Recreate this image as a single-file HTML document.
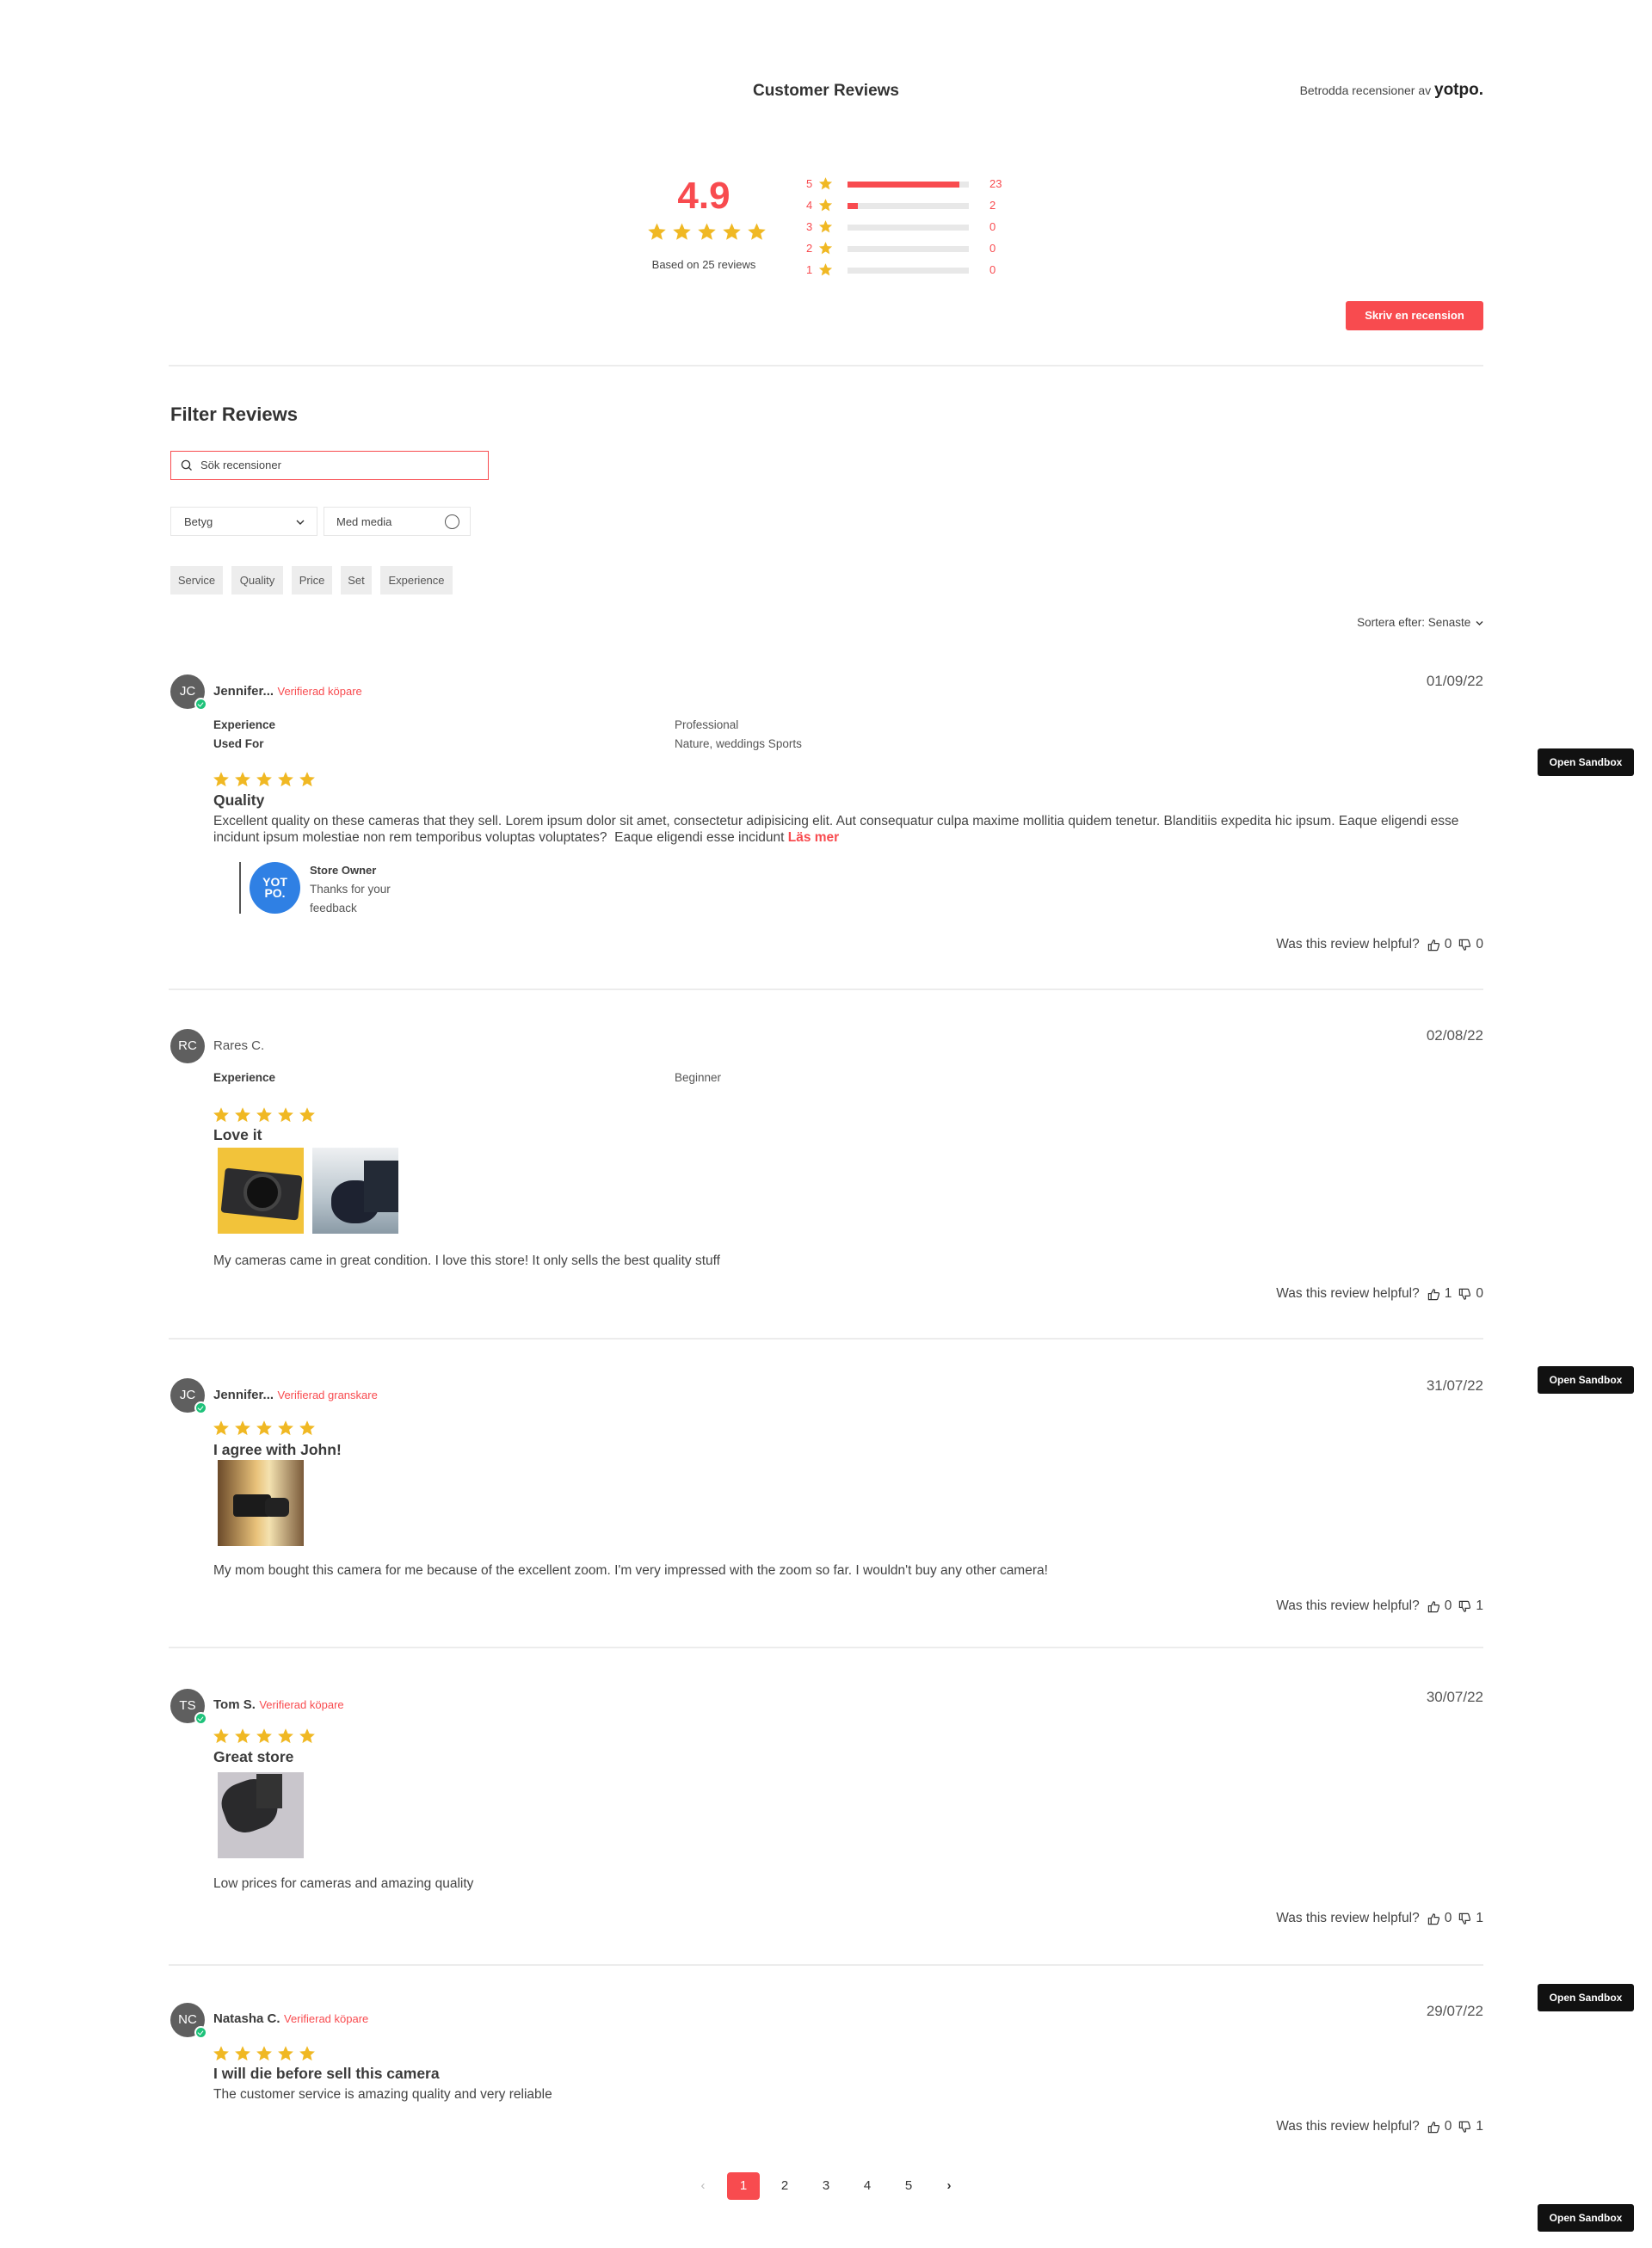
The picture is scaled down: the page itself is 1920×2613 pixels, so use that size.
<!DOCTYPE html>
<html><head><meta charset="utf-8">
<style>
*{margin:0;padding:0;box-sizing:border-box}
body{width:1920px;height:2613px;position:relative;background:#fff;font-family:"Liberation Sans",sans-serif;color:#3b3b3b;overflow:hidden}
.a{position:absolute;white-space:nowrap}
.c{line-height:20px}
.b{font-weight:bold}
.red{color:#f84b4f}
.sm{font-size:13px}
.hr{position:absolute;left:196px;width:1528px;height:2px;background:#ececec}
.av{position:absolute;left:198px;width:40px;height:40px;border-radius:50%;background:#5f5f5f;color:#fff;font-size:15px;line-height:40px;text-align:center}
.av i{position:absolute;right:-3px;bottom:-2px;width:15px;height:15px;border-radius:50%;background:#1ec27a;border:2px solid #fff}
.av i:after{content:"";position:absolute;left:3px;top:2px;width:3px;height:5px;border:solid #fff;border-width:0 1.5px 1.5px 0;transform:rotate(40deg)}
.date{position:absolute;right:196px;font-size:17px;line-height:20px;color:#555}
.help{position:absolute;right:196px;font-size:15.5px;line-height:20px;color:#444;display:flex;align-items:center;gap:5px}
.sb{position:absolute;left:1787px;width:112px;height:32px;background:#111;color:#fff;font-size:12px;font-weight:bold;line-height:32px;text-align:center;border-radius:3px}
.tag{position:absolute;top:658px;height:33px;background:#ededed;font-size:13px;line-height:33px;text-align:center;color:#555}
.bar{position:absolute;left:985px;width:141px;height:7px;background:#e8e8e8}
.bar i{position:absolute;left:0;top:0;height:7px;background:#f84b4f}
.img{position:absolute;width:100px;height:100px;overflow:hidden}
.pg{position:absolute;top:2531px;font-size:15px;line-height:20px;width:38px;text-align:center;color:#333}
.nm{font-size:15px}
.vf{font-size:13px}
.lb{font-size:13.5px}
.tt{font-size:17.5px}
.tx{font-size:15.5px;color:#444}
</style></head><body>
<svg width="0" height="0" style="position:absolute"><defs><symbol id="st" viewBox="0 0 24 24"><path fill="#f0b823" d="M12 1.5l3.1 7.1 7.6.6-5.8 5 1.8 7.5L12 17.7 5.3 21.7l1.8-7.5-5.8-5 7.6-.6z"/></symbol>
<symbol id="up" viewBox="0 0 16 16"><path fill="none" stroke="#333" stroke-width="1.3" d="M1.5 7h3v7.5h-3zM4.5 7.5l3-5.5c1.2 0 1.8.8 1.5 2L8.5 6H13c1 0 1.6.9 1.3 1.8l-1.6 5.6c-.2.7-.8 1.1-1.4 1.1H4.5"/></symbol>
<symbol id="dn" viewBox="0 0 16 16"><path fill="none" stroke="#333" stroke-width="1.3" d="M1.5 1.5h3V9h-3zM4.5 8.5l3 5.5c1.2 0 1.8-.8 1.5-2L8.5 10H13c1 0 1.6-.9 1.3-1.8L12.7 2.6c-.2-.7-.8-1.1-1.4-1.1H4.5"/></symbol></defs></svg>

<div class="a b c" style="left:0;width:1920px;text-align:center;top:96px;font-size:19px;color:#333">Customer Reviews</div>
<div class="a" style="right:196px;top:94px;line-height:22px;font-size:14px;color:#444">Betrodda recensioner av <span style="font-size:19px;font-weight:bold;color:#222">yotpo.</span></div>

<div class="a b red" style="left:758px;width:120px;text-align:center;top:203px;font-size:44px;line-height:50px">4.9</div>
<div class="a" style="left:752px;top:258px;height:24px">
<svg width="23" height="23"><use href="#st"/></svg><svg width="23" height="23" style="margin-left:6px"><use href="#st"/></svg><svg width="23" height="23" style="margin-left:6px"><use href="#st"/></svg><svg width="23" height="23" style="margin-left:6px"><use href="#st"/></svg><svg width="23" height="23" style="margin-left:6px"><use href="#st"/></svg></div>
<div class="a c" style="left:748px;width:140px;text-align:center;top:298px;font-size:13px;color:#444">Based on 25 reviews</div>

<div class="a red c sm" style="left:937px;top:204px">5</div><svg class="a" style="left:951px;top:205px" width="17" height="17"><use href="#st"/></svg><div class="bar" style="top:211px"><i style="width:130px"></i></div><div class="a red c sm" style="left:1150px;top:204px">23</div>
<div class="a red c sm" style="left:937px;top:229px">4</div><svg class="a" style="left:951px;top:230px" width="17" height="17"><use href="#st"/></svg><div class="bar" style="top:236px"><i style="width:12px"></i></div><div class="a red c sm" style="left:1150px;top:229px">2</div>
<div class="a red c sm" style="left:937px;top:254px">3</div><svg class="a" style="left:951px;top:255px" width="17" height="17"><use href="#st"/></svg><div class="bar" style="top:261px"></div><div class="a red c sm" style="left:1150px;top:254px">0</div>
<div class="a red c sm" style="left:937px;top:279px">2</div><svg class="a" style="left:951px;top:280px" width="17" height="17"><use href="#st"/></svg><div class="bar" style="top:286px"></div><div class="a red c sm" style="left:1150px;top:279px">0</div>
<div class="a red c sm" style="left:937px;top:304px">1</div><svg class="a" style="left:951px;top:305px" width="17" height="17"><use href="#st"/></svg><div class="bar" style="top:311px"></div><div class="a red c sm" style="left:1150px;top:304px">0</div>

<div class="a b" style="right:196px;top:350px;width:160px;height:34px;background:#f84b4f;color:#fff;font-size:13px;line-height:34px;text-align:center;border-radius:3px">Skriv en recension</div>
<div class="hr" style="top:424px"></div>

<div class="a b" style="left:198px;top:467px;font-size:22px;line-height:30px;color:#333">Filter Reviews</div>
<div class="a" style="left:198px;top:524px;width:370px;height:34px;border:1.5px solid #f84b4f"><svg class="a" style="left:11px;top:9px" width="14" height="14" viewBox="0 0 14 14"><circle cx="6" cy="6" r="4.6" fill="none" stroke="#333" stroke-width="1.3"/><path d="M9.3 9.3L12.5 12.5" stroke="#333" stroke-width="1.3"/></svg><span class="a c" style="left:34px;top:6px;font-size:13px;color:#444">Sök recensioner</span></div>
<div class="a" style="left:198px;top:589px;width:171px;height:34px;border:1px solid #e6e6e6"><span class="a c" style="left:15px;top:7px;font-size:13px;color:#444">Betyg</span><svg class="a" style="left:145px;top:13px" width="10" height="8"><path d="M1 2l4 4 4-4" fill="none" stroke="#333" stroke-width="1.4"/></svg></div>
<div class="a" style="left:376px;top:589px;width:171px;height:34px;border:1px solid #e6e6e6"><span class="a c" style="left:14px;top:7px;font-size:13px;color:#444">Med media</span><span class="a" style="left:140px;top:8px;width:17px;height:17px;border:1.3px solid #555;border-radius:50%"></span></div>

<div class="tag" style="left:198px;width:61px">Service</div>
<div class="tag" style="left:269px;width:60px">Quality</div>
<div class="tag" style="left:339px;width:47px">Price</div>
<div class="tag" style="left:396px;width:36px">Set</div>
<div class="tag" style="left:442px;width:84px">Experience</div>

<div class="a c" style="right:196px;top:714px;font-size:13.5px;color:#444">Sortera efter: Senaste <svg width="9" height="7" style="margin-left:2px"><path d="M1 1.5l3.5 3.5 3.5-3.5" fill="none" stroke="#333" stroke-width="1.4"/></svg></div>

<!-- Review 1 -->
<div class="av" style="top:784px">JC<i></i></div>
<div class="a c" style="left:248px;top:794px"><b class="nm">Jennifer...</b> <span class="red vf">Verifierad köpare</span></div>
<div class="date" style="top:782px">01/09/22</div>
<div class="a b c lb" style="left:248px;top:833px">Experience</div>
<div class="a c lb" style="left:784px;top:833px;color:#555">Professional</div>
<div class="a b c lb" style="left:248px;top:855px">Used For</div>
<div class="a c lb" style="left:784px;top:855px;color:#555">Nature, weddings Sports</div>
<div class="a" style="left:247px;top:896px;height:20px"><svg width="20" height="20"><use href="#st"/></svg><svg width="20" height="20" style="margin-left:5px"><use href="#st"/></svg><svg width="20" height="20" style="margin-left:5px"><use href="#st"/></svg><svg width="20" height="20" style="margin-left:5px"><use href="#st"/></svg><svg width="20" height="20" style="margin-left:5px"><use href="#st"/></svg></div>
<div class="a b c tt" style="left:248px;top:920px">Quality</div>
<div class="a tx" style="left:248px;top:945px;width:1476px;line-height:19px;white-space:normal">Excellent quality on these cameras that they sell. Lorem ipsum dolor sit amet, consectetur adipisicing elit. Aut consequatur culpa maxime mollitia quidem tenetur. Blanditiis expedita hic ipsum. Eaque eligendi esse incidunt ipsum molestiae non rem temporibus voluptas voluptates?&nbsp; Eaque eligendi esse incidunt <b class="red">Läs mer</b></div>
<div class="a" style="left:278px;top:1002px;width:1.5px;height:60px;background:#555"></div>
<div class="a b" style="left:290px;top:1002px;width:59px;height:60px;border-radius:50%;background:#2f80e4;color:#fff;font-size:14px;line-height:13px;text-align:center;padding-top:17px">YOT<br>PO.</div>
<div class="a b c" style="left:360px;top:1002px;font-size:13px">Store Owner</div>
<div class="a c" style="left:360px;top:1024px;font-size:13.5px;color:#555">Thanks for your</div>
<div class="a c" style="left:360px;top:1046px;font-size:13.5px;color:#555">feedback</div>
<div class="help" style="top:1088px">Was this review helpful? <svg width="15" height="15" style="margin-left:4px"><use href="#up"/></svg>0 <svg width="15" height="15" style="margin-left:3px"><use href="#dn"/></svg>0</div>
<div class="hr" style="top:1149px"></div>

<!-- Review 2 -->
<div class="av" style="top:1196px">RC</div>
<div class="a c nm" style="left:248px;top:1206px;color:#555">Rares C.</div>
<div class="date" style="top:1194px">02/08/22</div>
<div class="a b c lb" style="left:248px;top:1243px">Experience</div>
<div class="a c lb" style="left:784px;top:1243px;color:#555">Beginner</div>
<div class="a" style="left:247px;top:1286px;height:20px"><svg width="20" height="20"><use href="#st"/></svg><svg width="20" height="20" style="margin-left:5px"><use href="#st"/></svg><svg width="20" height="20" style="margin-left:5px"><use href="#st"/></svg><svg width="20" height="20" style="margin-left:5px"><use href="#st"/></svg><svg width="20" height="20" style="margin-left:5px"><use href="#st"/></svg></div>
<div class="a b c tt" style="left:248px;top:1309px">Love it</div>
<div class="img" style="left:253px;top:1334px;background:#f2c33a"><div class="a" style="left:6px;top:28px;width:90px;height:52px;background:#2c2c2e;border-radius:4px;transform:rotate(6deg)"></div><div class="a" style="left:30px;top:30px;width:44px;height:44px;border-radius:50%;background:#111;border:4px solid #444"></div></div>
<div class="img" style="left:363px;top:1334px;background:linear-gradient(#eef0f2,#b8c4cc 60%,#8a9aa6)"><div class="a" style="left:22px;top:38px;width:56px;height:50px;border-radius:45%;background:#1d2230"></div><div class="a" style="left:60px;top:15px;width:40px;height:60px;background:#232a36"></div></div>
<div class="a c tx" style="left:248px;top:1456px">My cameras came in great condition. I love this store! It only sells the best quality stuff</div>
<div class="help" style="top:1494px">Was this review helpful? <svg width="15" height="15" style="margin-left:4px"><use href="#up"/></svg>1 <svg width="15" height="15" style="margin-left:3px"><use href="#dn"/></svg>0</div>
<div class="hr" style="top:1555px"></div>

<!-- Review 3 -->
<div class="av" style="top:1602px">JC<i></i></div>
<div class="a c" style="left:248px;top:1612px"><b class="nm">Jennifer...</b> <span class="red vf">Verifierad granskare</span></div>
<div class="date" style="top:1601px">31/07/22</div>
<div class="a" style="left:247px;top:1650px;height:20px"><svg width="20" height="20"><use href="#st"/></svg><svg width="20" height="20" style="margin-left:5px"><use href="#st"/></svg><svg width="20" height="20" style="margin-left:5px"><use href="#st"/></svg><svg width="20" height="20" style="margin-left:5px"><use href="#st"/></svg><svg width="20" height="20" style="margin-left:5px"><use href="#st"/></svg></div>
<div class="a b c tt" style="left:248px;top:1675px">I agree with John!</div>
<div class="img" style="left:253px;top:1697px;background:linear-gradient(90deg,#6b4a2a,#e9c27a 45%,#f4e2b0 60%,#7a5a3a)"><div class="a" style="left:18px;top:40px;width:44px;height:26px;background:#1b1b1b;border-radius:4px"></div><div class="a" style="left:55px;top:44px;width:28px;height:22px;background:#222;border-radius:6px"></div></div>
<div class="a c tx" style="left:248px;top:1816px">My mom bought this camera for me because of the excellent zoom. I'm very impressed with the zoom so far. I wouldn't buy any other camera!</div>
<div class="help" style="top:1857px">Was this review helpful? <svg width="15" height="15" style="margin-left:4px"><use href="#up"/></svg>0 <svg width="15" height="15" style="margin-left:3px"><use href="#dn"/></svg>1</div>
<div class="hr" style="top:1914px"></div>

<!-- Review 4 -->
<div class="av" style="top:1963px">TS<i></i></div>
<div class="a c" style="left:248px;top:1972px"><b class="nm">Tom S.</b> <span class="red vf">Verifierad köpare</span></div>
<div class="date" style="top:1963px">30/07/22</div>
<div class="a" style="left:247px;top:2008px;height:20px"><svg width="20" height="20"><use href="#st"/></svg><svg width="20" height="20" style="margin-left:5px"><use href="#st"/></svg><svg width="20" height="20" style="margin-left:5px"><use href="#st"/></svg><svg width="20" height="20" style="margin-left:5px"><use href="#st"/></svg><svg width="20" height="20" style="margin-left:5px"><use href="#st"/></svg></div>
<div class="a b c tt" style="left:248px;top:2032px">Great store</div>
<div class="img" style="left:253px;top:2060px;background:#c9c6cc"><div class="a" style="left:6px;top:10px;width:62px;height:58px;background:#2a2a2c;border-radius:40%;transform:rotate(-20deg)"></div><div class="a" style="left:45px;top:2px;width:30px;height:40px;background:#333"></div></div>
<div class="a c tx" style="left:248px;top:2180px">Low prices for cameras and amazing quality</div>
<div class="help" style="top:2220px">Was this review helpful? <svg width="15" height="15" style="margin-left:4px"><use href="#up"/></svg>0 <svg width="15" height="15" style="margin-left:3px"><use href="#dn"/></svg>1</div>
<div class="hr" style="top:2283px"></div>

<!-- Review 5 -->
<div class="av" style="top:2328px">NC<i></i></div>
<div class="a c" style="left:248px;top:2337px"><b class="nm">Natasha C.</b> <span class="red vf">Verifierad köpare</span></div>
<div class="date" style="top:2328px">29/07/22</div>
<div class="a" style="left:247px;top:2377px;height:20px"><svg width="20" height="20"><use href="#st"/></svg><svg width="20" height="20" style="margin-left:5px"><use href="#st"/></svg><svg width="20" height="20" style="margin-left:5px"><use href="#st"/></svg><svg width="20" height="20" style="margin-left:5px"><use href="#st"/></svg><svg width="20" height="20" style="margin-left:5px"><use href="#st"/></svg></div>
<div class="a b c tt" style="left:248px;top:2400px">I will die before sell this camera</div>
<div class="a c tx" style="left:248px;top:2425px">The customer service is amazing quality and very reliable</div>
<div class="help" style="top:2462px">Was this review helpful? <svg width="15" height="15" style="margin-left:4px"><use href="#up"/></svg>0 <svg width="15" height="15" style="margin-left:3px"><use href="#dn"/></svg>1</div>

<!-- Pagination -->
<div class="pg" style="left:798px;color:#bbb">‹</div>
<div class="a" style="left:845px;top:2525px;width:38px;height:32px;background:#f84b4f;border-radius:4px;color:#fff;font-size:15px;line-height:32px;text-align:center">1</div>
<div class="pg" style="left:893px">2</div>
<div class="pg" style="left:941px">3</div>
<div class="pg" style="left:989px">4</div>
<div class="pg" style="left:1037px">5</div>
<div class="pg b" style="left:1084px">›</div>

<div class="sb" style="top:870px">Open Sandbox</div>
<div class="sb" style="top:1588px">Open Sandbox</div>
<div class="sb" style="top:2306px">Open Sandbox</div>
<div class="sb" style="top:2562px">Open Sandbox</div>
</body></html>
